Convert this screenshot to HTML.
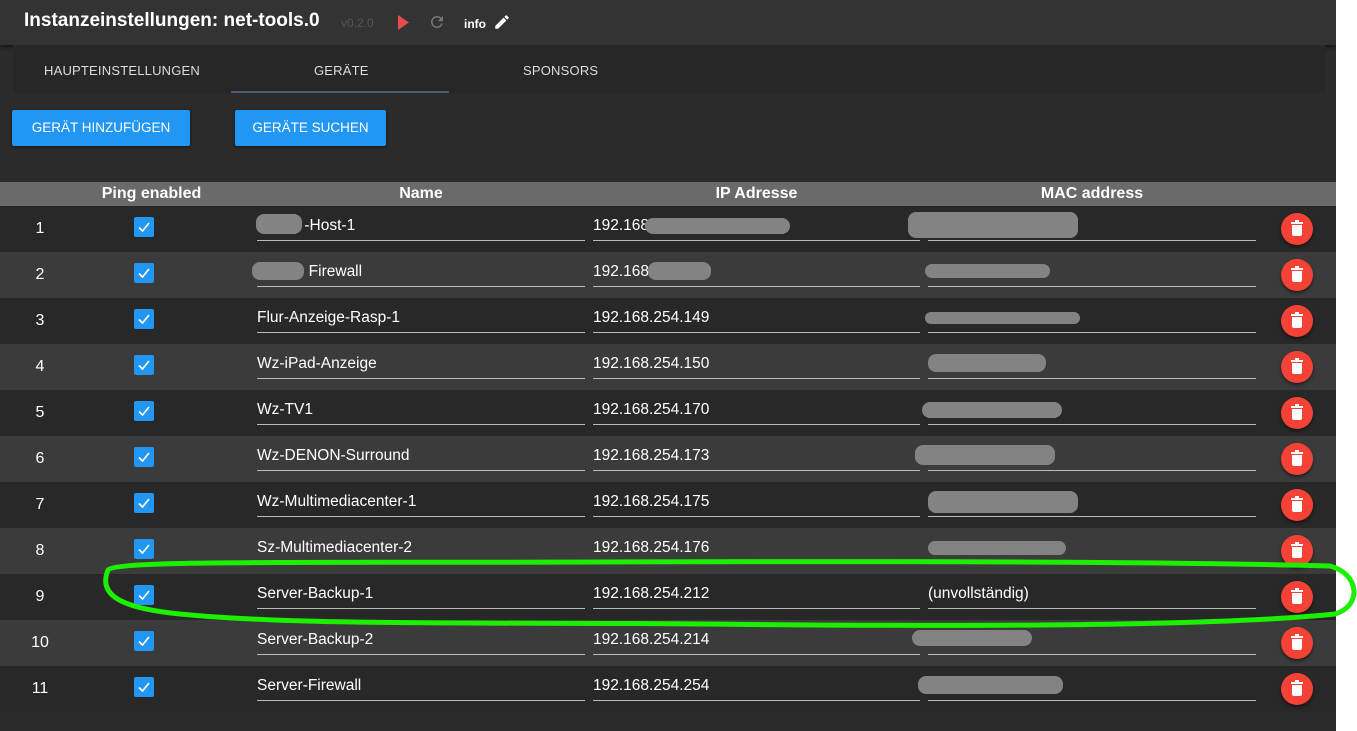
<!DOCTYPE html><html><head><meta charset="utf-8"><style>
*{margin:0;padding:0;box-sizing:border-box}
body{width:1357px;height:731px;background:#fff;font-family:"Liberation Sans",sans-serif;position:relative;overflow:hidden}
.main{position:absolute;left:0;top:0;width:1336px;height:731px;background:#2b2b2b;overflow:hidden}
.hdr{position:absolute;left:0;top:0;width:1336px;height:45px;background:#333;box-shadow:0 2px 4px rgba(0,0,0,.5)}
.a{position:absolute}
.tabs{position:absolute;left:13px;top:45px;width:1312px;height:48px;background:#272727}
.tab{position:absolute;top:18px;font-size:13px;color:#ddd;letter-spacing:.2px}
.btn{position:absolute;top:110px;height:36px;background:#2196f3;color:#fff;font-size:13.5px;line-height:36px;text-align:center;border-radius:2px;box-shadow:0 1px 3px rgba(0,0,0,.5)}
.th{position:absolute;top:182px;left:0;width:1336px;height:24px;background:#6a6a6a}
.th span{position:absolute;top:3px;font-weight:bold;color:#fff;font-size:16px;text-align:center}
.row{position:absolute;left:0;width:1336px;height:46px}
.n{position:absolute;left:20px;width:40px;text-align:center;top:14px;color:#fff;font-size:16px}
.cb{position:absolute;left:134px;top:11px;width:20px;height:20px;background:#2196f3;border-radius:2px}
.cb svg{position:absolute;left:3px;top:3px}
.in{position:absolute;top:10px;height:25px;border-bottom:1px solid #bbb;color:#fff;font-size:15.5px;line-height:20px}
.del{position:absolute;left:1281px;top:7px;width:32px;height:32px;border-radius:50%;background:#f44336;box-shadow:0 2px 3px rgba(0,0,0,.5)}
.del i{position:absolute;left:11px;top:12px;width:10px;height:11px;background:#fff;border-radius:0 0 2px 2px}
.del b{position:absolute;left:10px;top:9px;width:12px;height:2px;background:#fff}
.del u{position:absolute;left:14px;top:7px;width:4px;height:2px;background:#fff}
.bl{position:absolute;background:#838383;border-radius:8px}
</style></head><body><div class="main">
<div class="hdr">
<div class="a" style="left:24px;top:10px;color:#fff;font-size:19px;font-weight:bold">Instanzeinstellungen: net-tools.0</div>
<div class="a" style="left:341px;top:16px;color:#555;font-size:12px">v0.2.0</div>
<svg class="a" style="left:398px;top:15px" width="12" height="15"><path d="M0 0L11 7.5L0 15Z" fill="#e84c4c"/></svg>
<svg class="a" style="left:428px;top:13px" width="18" height="18" viewBox="0 0 24 24"><path d="M17.65 6.35A7.96 7.96 0 0 0 12 4a8 8 0 1 0 7.730 10h-2.08A6 6 0 1 1 12 6c1.66 0 3.14.69 4.22 1.78L13 11h7V4z" fill="#777"/></svg>
<div class="a" style="left:464px;top:17px;color:#fff;font-size:12px;font-weight:bold">info</div>
<svg class="a" style="left:493px;top:13px" width="18" height="18" viewBox="0 0 24 24"><path d="M3 17.25V21h3.75L17.81 9.94l-3.75-3.75zM20.71 7.04a1 1 0 0 0 0-1.41l-2.34-2.34a1 1 0 0 0-1.41 0l-1.83 1.83 3.75 3.75z" fill="#fff"/></svg>
</div>
<div class="tabs">
<div class="tab" style="left:31px">HAUPTEINSTELLUNGEN</div>
<div class="tab" style="left:301px">GERÄTE</div>
<div class="tab" style="left:510px">SPONSORS</div>
<div class="a" style="left:218px;top:46px;width:218px;height:2px;background:#4a5a70"></div>
</div>
<div class="btn" style="left:12px;width:178px">GERÄT HINZUFÜGEN</div>
<div class="btn" style="left:235px;width:151px">GERÄTE SUCHEN</div>
<div class="th">
<span style="left:50px;width:203px">Ping enabled</span>
<span style="left:253px;width:336px">Name</span>
<span style="left:589px;width:335px">IP Adresse</span>
<span style="left:924px;width:336px">MAC address</span>
</div>
<div class="row" style="top:206px;background:#282828"><div class="n">1</div><div class="cb"><svg width="14" height="14"><path d="M2 7.5L5.5 11L12 3" stroke="#fff" stroke-width="1.6" fill="none"/></svg></div><div class="in" style="left:257px;width:328px">&nbsp;&nbsp;&nbsp;&nbsp;&nbsp;&nbsp;&nbsp;&nbsp;&nbsp;&nbsp;&nbsp;-Host-1</div><div class="in" style="left:593px;width:327px">192.168</div><div class="in" style="left:928px;width:328px"></div><div class="del"><u></u><b></b><i></i></div></div>
<div class="row" style="top:252px;background:#3b3b3b"><div class="n">2</div><div class="cb"><svg width="14" height="14"><path d="M2 7.5L5.5 11L12 3" stroke="#fff" stroke-width="1.6" fill="none"/></svg></div><div class="in" style="left:257px;width:328px">&nbsp;&nbsp;&nbsp;&nbsp;&nbsp;&nbsp;&nbsp;&nbsp;&nbsp;&nbsp;&nbsp;&nbsp;Firewall</div><div class="in" style="left:593px;width:327px">192.168.</div><div class="in" style="left:928px;width:328px"></div><div class="del"><u></u><b></b><i></i></div></div>
<div class="row" style="top:298px;background:#282828"><div class="n">3</div><div class="cb"><svg width="14" height="14"><path d="M2 7.5L5.5 11L12 3" stroke="#fff" stroke-width="1.6" fill="none"/></svg></div><div class="in" style="left:257px;width:328px">Flur-Anzeige-Rasp-1</div><div class="in" style="left:593px;width:327px">192.168.254.149</div><div class="in" style="left:928px;width:328px"></div><div class="del"><u></u><b></b><i></i></div></div>
<div class="row" style="top:344px;background:#3b3b3b"><div class="n">4</div><div class="cb"><svg width="14" height="14"><path d="M2 7.5L5.5 11L12 3" stroke="#fff" stroke-width="1.6" fill="none"/></svg></div><div class="in" style="left:257px;width:328px">Wz-iPad-Anzeige</div><div class="in" style="left:593px;width:327px">192.168.254.150</div><div class="in" style="left:928px;width:328px"></div><div class="del"><u></u><b></b><i></i></div></div>
<div class="row" style="top:390px;background:#282828"><div class="n">5</div><div class="cb"><svg width="14" height="14"><path d="M2 7.5L5.5 11L12 3" stroke="#fff" stroke-width="1.6" fill="none"/></svg></div><div class="in" style="left:257px;width:328px">Wz-TV1</div><div class="in" style="left:593px;width:327px">192.168.254.170</div><div class="in" style="left:928px;width:328px"></div><div class="del"><u></u><b></b><i></i></div></div>
<div class="row" style="top:436px;background:#3b3b3b"><div class="n">6</div><div class="cb"><svg width="14" height="14"><path d="M2 7.5L5.5 11L12 3" stroke="#fff" stroke-width="1.6" fill="none"/></svg></div><div class="in" style="left:257px;width:328px">Wz-DENON-Surround</div><div class="in" style="left:593px;width:327px">192.168.254.173</div><div class="in" style="left:928px;width:328px"></div><div class="del"><u></u><b></b><i></i></div></div>
<div class="row" style="top:482px;background:#282828"><div class="n">7</div><div class="cb"><svg width="14" height="14"><path d="M2 7.5L5.5 11L12 3" stroke="#fff" stroke-width="1.6" fill="none"/></svg></div><div class="in" style="left:257px;width:328px">Wz-Multimediacenter-1</div><div class="in" style="left:593px;width:327px">192.168.254.175</div><div class="in" style="left:928px;width:328px"></div><div class="del"><u></u><b></b><i></i></div></div>
<div class="row" style="top:528px;background:#3b3b3b"><div class="n">8</div><div class="cb"><svg width="14" height="14"><path d="M2 7.5L5.5 11L12 3" stroke="#fff" stroke-width="1.6" fill="none"/></svg></div><div class="in" style="left:257px;width:328px">Sz-Multimediacenter-2</div><div class="in" style="left:593px;width:327px">192.168.254.176</div><div class="in" style="left:928px;width:328px"></div><div class="del"><u></u><b></b><i></i></div></div>
<div class="row" style="top:574px;background:#282828"><div class="n">9</div><div class="cb"><svg width="14" height="14"><path d="M2 7.5L5.5 11L12 3" stroke="#fff" stroke-width="1.6" fill="none"/></svg></div><div class="in" style="left:257px;width:328px">Server-Backup-1</div><div class="in" style="left:593px;width:327px">192.168.254.212</div><div class="in" style="left:928px;width:328px">(unvollständig)</div><div class="del"><u></u><b></b><i></i></div></div>
<div class="row" style="top:620px;background:#3b3b3b"><div class="n">10</div><div class="cb"><svg width="14" height="14"><path d="M2 7.5L5.5 11L12 3" stroke="#fff" stroke-width="1.6" fill="none"/></svg></div><div class="in" style="left:257px;width:328px">Server-Backup-2</div><div class="in" style="left:593px;width:327px">192.168.254.214</div><div class="in" style="left:928px;width:328px"></div><div class="del"><u></u><b></b><i></i></div></div>
<div class="row" style="top:666px;background:#282828"><div class="n">11</div><div class="cb"><svg width="14" height="14"><path d="M2 7.5L5.5 11L12 3" stroke="#fff" stroke-width="1.6" fill="none"/></svg></div><div class="in" style="left:257px;width:328px">Server-Firewall</div><div class="in" style="left:593px;width:327px">192.168.254.254</div><div class="in" style="left:928px;width:328px"></div><div class="del"><u></u><b></b><i></i></div></div>
<div class="bl" style="left:256px;top:214px;width:46px;height:20px"></div>
<div class="bl" style="left:645px;top:218px;width:145px;height:16px"></div>
<div class="bl" style="left:908px;top:212px;width:170px;height:26px"></div>
<div class="bl" style="left:252px;top:262px;width:52px;height:18px"></div>
<div class="bl" style="left:648px;top:262px;width:63px;height:18px"></div>
<div class="bl" style="left:925px;top:264px;width:125px;height:14px"></div>
<div class="bl" style="left:925px;top:312px;width:155px;height:12px"></div>
<div class="bl" style="left:928px;top:354px;width:118px;height:18px"></div>
<div class="bl" style="left:922px;top:402px;width:140px;height:16px"></div>
<div class="bl" style="left:915px;top:445px;width:140px;height:20px"></div>
<div class="bl" style="left:928px;top:491px;width:150px;height:22px"></div>
<div class="bl" style="left:928px;top:541px;width:138px;height:14px"></div>
<div class="bl" style="left:912px;top:630px;width:120px;height:16px"></div>
<div class="bl" style="left:918px;top:676px;width:145px;height:18px"></div>
</div>
<svg class="a" style="left:0;top:0" width="1357" height="731"><path d="M108 570 C115 560 300 563 600 562 C900 561 1180 562 1330 566 C1360 574 1362 606 1335 614 C1200 628 900 626 700 624 C500 622 300 626 180 614 C120 608 98 595 108 570 Z" fill="none" stroke="#1cf000" stroke-width="5"/></svg>
</body></html>
